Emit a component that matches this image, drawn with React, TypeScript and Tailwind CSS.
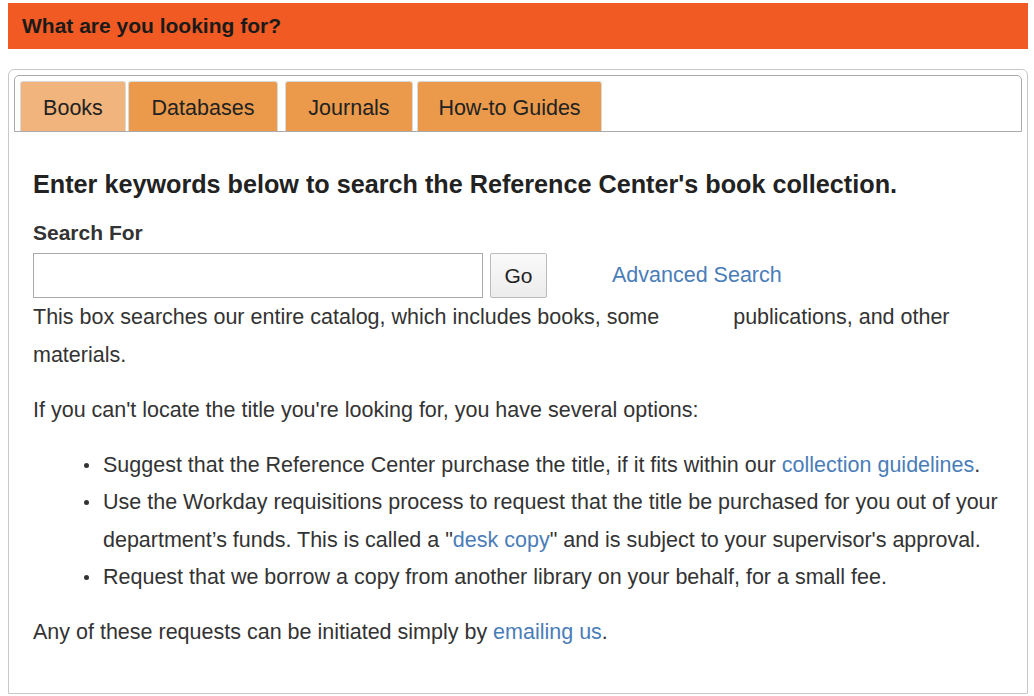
import React from 'react'

const tabs = [
  { label: 'Books', w: 'w-[106px]', ml: 'ml-0', bg: 'bg-[#f0b47c]' },
  { label: 'Databases', w: 'w-[150px]', ml: 'ml-[2px]', bg: 'bg-[#eb9a4b]' },
  { label: 'Journals', w: 'w-[128px]', ml: 'ml-[7px]', bg: 'bg-[#eb9a4b]' },
  { label: 'How-to Guides', w: 'w-[185px]', ml: 'ml-[4px]', bg: 'bg-[#eb9a4b]' },
]

function Bullet({ children }: { children: React.ReactNode }) {
  return (
    <li className="flex">
      <span className="w-[19px] shrink-0 flex items-start pt-[16px]">
        <span className="block w-[5px] h-[5px] rounded-full bg-[#333]" />
      </span>
      <div>{children}</div>
    </li>
  )
}

export default function App() {
  return (
    <div className="min-h-[696px] bg-white pt-[3px] pl-2 pr-[6px] font-['Liberation_Sans',Arial,sans-serif] text-[#333]">
      {/* Title bar */}
      <div className="h-[46px] bg-[#f15a22] flex items-center px-[14px]">
        <h2 className="text-[21px] font-bold text-[#1a1a1a]">What are you looking for?</h2>
      </div>

      {/* Panel */}
      <div className="mt-5 h-[625px] border border-[#c8c8c8] rounded-t-[6px] p-[5px]">
        {/* Tab bar */}
        <div className="border border-[#aaa] rounded-t-[5px] px-[5px] pt-[5px] flex items-end">
          {tabs.map(t => (
            <button
              key={t.label}
              className={`${t.w} ${t.ml} ${t.bg} h-[50px] pt-[3px] text-[21.5px] text-[#222] rounded-t-[3px] border border-b-0 border-[#d9d9d9]`}
            >
              {t.label}
            </button>
          ))}
        </div>

        {/* Content */}
        <div className="px-[19px] pt-[37px]">
          <h3 className="text-[25.2px] font-bold text-[#222] leading-[30px]">
            Enter keywords below to search the Reference Center's book collection.
          </h3>
          <label className="block mt-[19px] text-[21px] font-bold text-[#333] leading-[30px]">Search For</label>
          <div className="mt-[5px] flex items-center">
            <input className="w-[450px] h-[45px] border border-[#aaa] px-2 text-[20px] outline-none" />
            <button className="ml-[7px] w-[57px] h-[45px] border border-[#bbb] rounded-[2px] bg-gradient-to-b from-[#fafafa] to-[#ececec] text-[21px] text-[#222]">
              Go
            </button>
            <a className="ml-[65px] text-[21.5px] text-[#4a7db8]">Advanced Search</a>
          </div>

          <div className="text-[21.5px] leading-[37.5px]">
            <p className="mt-[1px]">
              This box searches our entire catalog, which includes books, some{' '}
              <span className="inline-block w-[62px]" /> publications, and other materials.
            </p>
            <p className="mt-[18px]">If you can't locate the title you're looking for, you have several options:</p>
            <ul className="mt-[17px] pl-[51px]">
              <Bullet>
                Suggest that the Reference Center purchase the title, if it fits within our{' '}
                <a className="text-[#4a7db8]">collection guidelines</a>.
              </Bullet>
              <Bullet>
                Use the Workday requisitions process to request that the title be purchased for you out of your
                department’s funds. This is called a "<a className="text-[#4a7db8]">desk copy</a>" and is subject to
                your supervisor's approval.
              </Bullet>
              <Bullet>Request that we borrow a copy from another library on your behalf, for a small fee.</Bullet>
            </ul>
            <p className="mt-[17px]">
              Any of these requests can be initiated simply by <a className="text-[#4a7db8]">emailing us</a>.
            </p>
          </div>
        </div>
      </div>
    </div>
  )
}
